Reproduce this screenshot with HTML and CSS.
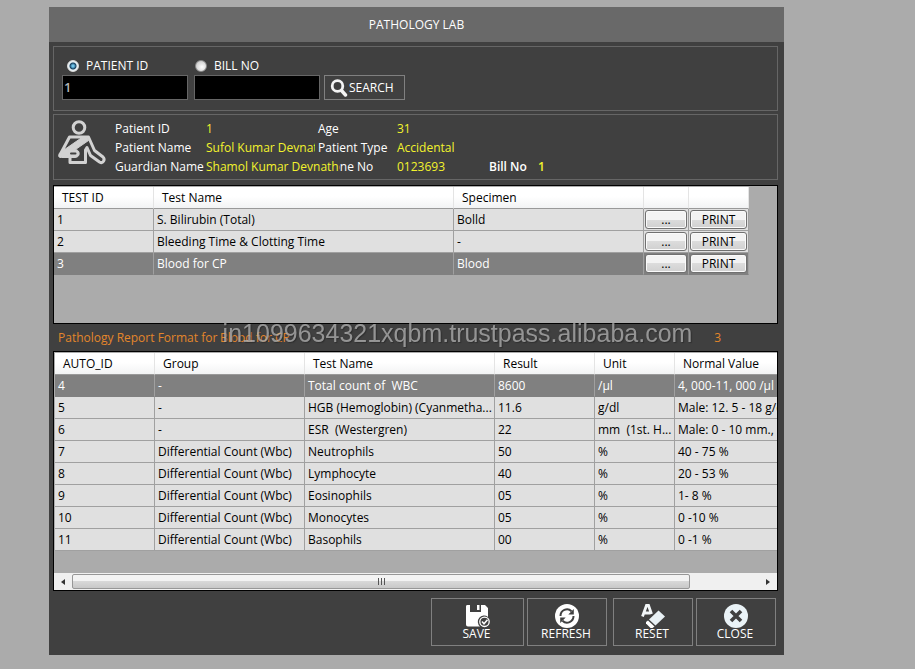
FILE: index.html
```html
<!DOCTYPE html>
<html lang="en">
<head>
<meta charset="utf-8">
<title>Pathology Lab</title>
<link rel="stylesheet" href="styles.css">
</head>
<body>
<main class="window">
  <h1 class="titlebar">PATHOLOGY LAB</h1>
  <div class="content">
    <form class="panel search">
      <div class="field">
        <label class="choice"><input type="radio" name="by" checked>PATIENT ID</label>
        <input class="box" type="text" value="1" aria-label="Patient ID">
      </div>
      <div class="field">
        <label class="choice"><input type="radio" name="by">BILL NO</label>
        <input class="box" type="text" aria-label="Bill No">
      </div>
      <button class="search-button" type="button">
        <svg width="18" height="18" viewBox="0 0 18 18" fill="none" stroke="#f4f4f4"><circle cx="7.500" cy="7" r="5.300" stroke-width="2.800"/><path d="M11.500 11.500l4 4.500" stroke-width="3.400" stroke-linecap="round"/></svg>
        SEARCH
      </button>
    </form>

    <section class="panel patient">
      <svg class="person" width="50" height="48" viewBox="0 0 50 48" fill="none" stroke="#d2d2d2" stroke-width="3" stroke-linejoin="round" stroke-linecap="round"><circle cx="21" cy="8.500" r="5.800"/><path d="M12 38V43.500H27.500V31L29 28.500L32.500 36.500L41.500 43C45 45 47.500 40.500 45 38L36.500 31.500L30.500 18H11.500L3 34"/><path d="M24 18.500L1.500 34Q-1 39 3.500 38.500L17 38.500C22.500 38.500 22.500 31 17.500 30.500L30.500 21.500L29 18Z" fill="#d2d2d2" stroke-width="1"/><path d="M13 34.500H17.500" stroke="#404040" stroke-width="2"/></svg>
      <dl class="facts">
        <dt>Patient ID</dt><dd>1</dd><dt>Age</dt><dd>31</dd>
        <dt class="start">Patient Name</dt><dd class="clip">Sufol Kumar Devnath</dd><dt>Patient Type</dt><dd>Accidental</dd>
        <dt class="start">Guardian Name</dt><dd class="over">Shamol Kumar Devnath</dd><dt>Phone No</dt><dd>0123693</dd><dt class="strong">Bill No</dt><dd class="strong">1</dd>
      </dl>
    </section>

    <section class="grid-frame tests">
      <table class="tests-table">
        <colgroup><col class="w100"><col class="w300"><col class="w190"><col class="w45"><col class="w60"></colgroup>
        <thead><tr><th>TEST ID</th><th>Test Name</th><th>Specimen</th><th></th><th></th></tr></thead>
        <tbody>
          <tr><td>1</td><td>S. Bilirubin (Total)</td><td>Bolld</td><td class="act"><button type="button">...</button></td><td class="act"><button type="button">PRINT</button></td></tr>
          <tr><td>2</td><td>Bleeding Time &amp; Clotting Time</td><td>-</td><td class="act"><button type="button">...</button></td><td class="act"><button type="button">PRINT</button></td></tr>
          <tr class="selected"><td>3</td><td>Blood for CP</td><td>Blood</td><td class="act"><button type="button">...</button></td><td class="act"><button type="button">PRINT</button></td></tr>
        </tbody>
      </table>
    </section>

    <div class="format"><span>Pathology Report Format for</span><span>Blood for CP</span><span class="format-id">3</span></div>

    <section class="grid-frame results">
      <div class="viewport">
      <table class="results-table">
        <colgroup><col class="w100"><col class="w150"><col class="w190"><col class="w100"><col class="w80"><col class="w184"></colgroup>
        <thead><tr><th>AUTO_ID</th><th>Group</th><th>Test Name</th><th>Result</th><th>Unit</th><th>Normal Value</th></tr></thead>
        <tbody>
          <tr class="selected"><td>4</td><td>-</td><td>Total count of&nbsp; WBC</td><td>8600</td><td>/µl</td><td>4, 000-11, 000 /µl</td></tr>
          <tr><td>5</td><td>-</td><td>HGB (Hemoglobin) (Cyanmetha...</td><td>11.6</td><td>g/dl</td><td>Male: 12. 5 - 18 g/dl</td></tr>
          <tr><td>6</td><td>-</td><td>ESR&nbsp; (Westergren)</td><td>22</td><td>mm&nbsp; (1st. H...</td><td>Male: 0 - 10 mm., Female</td></tr>
          <tr><td>7</td><td>Differential Count (Wbc)</td><td>Neutrophils</td><td>50</td><td>%</td><td>40 - 75 %</td></tr>
          <tr><td>8</td><td>Differential Count (Wbc)</td><td>Lymphocyte</td><td>40</td><td>%</td><td>20 - 53 %</td></tr>
          <tr><td>9</td><td>Differential Count (Wbc)</td><td>Eosinophils</td><td>05</td><td>%</td><td>1- 8 %</td></tr>
          <tr><td>10</td><td>Differential Count (Wbc)</td><td>Monocytes</td><td>05</td><td>%</td><td>0 -10 %</td></tr>
          <tr><td>11</td><td>Differential Count (Wbc)</td><td>Basophils</td><td>00</td><td>%</td><td>0 -1 %</td></tr>
        </tbody>
      </table>
      </div>
      <div class="scrollbar">
        <button class="arrow" type="button" aria-label="Scroll left"><svg width="4" height="6" viewBox="0 0 4 6"><path d="M4 0V6L0 3Z" fill="#333"/></svg></button>
        <div class="track"><div class="thumb"><i></i><i></i><i></i></div></div>
        <button class="arrow" type="button" aria-label="Scroll right"><svg width="4" height="6" viewBox="0 0 4 6"><path d="M0 0V6L4 3Z" fill="#333"/></svg></button>
      </div>
    </section>

    <footer class="actions">
      <div class="pair">
        <button class="wide" type="button">
          <svg width="26" height="26" viewBox="0 0 26 26"><path d="M3 2H6V9H17V2H21L24 5V14A6 6 0 0 0 16 23.500H4Q2 23.500 2 21.500V3.500Q2 2 3 2Z" fill="#fff"/><path d="M13 2H15.500V7H13Z" fill="#fff"/><circle cx="20.500" cy="18.800" r="4.700" fill="#404040" stroke="#fff" stroke-width="1.300"/><path d="M18 18.500L20 20.800L23.500 16.800" fill="none" stroke="#fff" stroke-width="1.500"/></svg>
          SAVE</button>
        <button type="button">
          <svg width="26" height="26" viewBox="0 0 26 26"><circle cx="14" cy="13" r="12" fill="#fff"/><path d="M7.500 13A6.500 6.500 0 0 1 18.500 8.200M20.500 13A6.500 6.500 0 0 1 9.500 17.800" fill="none" stroke="#404040" stroke-width="2"/><path d="M20.800 6V11.500H15.300ZM7.200 20V14.500H12.700Z" fill="#404040"/></svg>
          REFRESH</button>
      </div>
      <div class="pair">
        <button type="button">
          <svg width="26" height="26" viewBox="0 0 26 26"><path d="M3.500 13.500L7.500 2.500H9.500L12.500 11M5 10H11" fill="none" stroke="#f2f6f8" stroke-width="2.800"/><path d="M19.500 7.500L26 13.500L16.500 22.500L10 16.500Z" fill="#e8f1f5"/><path d="M9 17.500L15.500 23.500L13.500 25H11.500L7 20.500V19Z" fill="#fff"/></svg>
          RESET</button>
        <button type="button">
          <svg width="26" height="26" viewBox="0 0 26 26"><circle cx="14" cy="13" r="12" fill="#eaf3f7"/><path d="M9 8L19 18M19 8L9 18" stroke="#404040" stroke-width="3.600"/></svg>
          CLOSE</button>
      </div>
    </footer>
  </div>
</main>
<div class="watermark">in1099634321xqbm.trustpass.alibaba.com</div>
</body>
</html>
```
FILE: styles.css
```css
* { box-sizing: border-box; }
body {
  margin: 0;
  padding: 7px 131px 14px 49px;
  background: #ababab;
  font: 12px/18px "Open Sans", "Noto Sans", sans-serif;
  color: #000;
}
button, input { font: inherit; }
.window { background: #404040; }
.titlebar {
  margin: 0;
  background: #696969;
  color: #fff;
  font-size: 12px;
  font-weight: 400;
  line-height: 35px;
  text-align: center;
}
.content { padding: 4px 6px 9px 4px; }
.panel { border: 1px solid #666; color: #fff; }

.search {
  display: flex;
  align-items: flex-end;
  height: 65px;
  padding: 0 8px 10px;
}
.field { width: 126px; margin-right: 6px; }
.field + .field { margin-right: 4px; }
.choice { display: flex; align-items: center; gap: 7px; padding-left: 5px; height: 19px; }
.field + .field .choice { padding-left: 1px; }
.choice input {
  appearance: none;
  width: 12px;
  height: 12px;
  margin: 0;
  border: 1px solid #8b8b8b;
  border-radius: 50%;
  background: radial-gradient(circle at 60% 60%, #fff, #bbb);
}
.choice input:checked { border-color: #ddd; background: radial-gradient(circle, #6fc3ea 0 1px, #143f60 3px, #e8f1f5 4px); }
.box {
  display: block;
  width: 100%;
  height: 25px;
  padding: 0 1px 2px;
  border: 1px solid #666;
  border-radius: 0;
  background: #000;
  color: #b4b4b4;
  font-size: 13px;
  font-weight: 600;
}
.search-button {
  display: flex;
  align-items: center;
  gap: 1px;
  width: 81px;
  height: 25px;
  padding: 0 0 0 5px;
  border: 1px solid #808080;
  background: #404040;
  color: #fff;
}

.patient { display: flex; height: 66px; margin-top: 3px; padding: 4px 4px 0; }
.person { flex: none; }
.facts {
  display: grid;
  grid-template-columns: 91px 112px 79px 92px 49px 40px;
  grid-auto-rows: 19px;
  margin: 0 0 0 7px;
  line-height: 19px;
  white-space: nowrap;
}
.facts dd { margin: 0; color: #f3f32c; }
.facts .start { grid-column: 1; }
.facts .clip { overflow: hidden; margin-right: 3px; }
.facts .over { position: relative; justify-self: start; background: #404040; }
.facts .strong { font-weight: 600; }

.grid-frame { padding-top: 1px; border: 1px solid #000; background: #ababab; }
.tests { min-height: 139px; margin-top: 5px; }
table { border-collapse: separate; border-spacing: 0; table-layout: fixed; }
.tests-table { width: 695px; }
.results-table { width: 804px; }
.w45 { width: 45px; }
.w60 { width: 60px; }
.w80 { width: 80px; }
.w100 { width: 100px; }
.w150 { width: 150px; }
.w184 { width: 184px; }
.w190 { width: 190px; }
.w300 { width: 300px; }
th {
  height: 22px;
  padding: 0 8px;
  border-right: 1px solid #e4e4e4;
  border-bottom: 1px solid #999;
  background: linear-gradient(#fff 45%, #f2f3f4);
  font-weight: 400;
  text-align: left;
}
td {
  height: 22px;
  padding: 0 0 0 3px;
  border-right: 1px solid #a0a0a0;
  border-bottom: 1px solid #a0a0a0;
  background: #e0e0e0;
  overflow: hidden;
  white-space: nowrap;
}
.selected td { background: #808080; border-bottom-color: #808080; color: #fff; }
.act { padding: 0 1px; }
.act button {
  display: block;
  width: 100%;
  height: 19px;
  padding: 0;
  border: 1px solid #707070;
  border-radius: 3px;
  background: linear-gradient(#f3f3f3 50%, #dcdcdc 50%, #d0d0d0);
  box-shadow: inset 0 0 0 1px #fafafa;
  line-height: 17px;
}

.format {
  display: grid;
  grid-template-columns: 162px 1fr auto;
  height: 27px;
  padding: 0 57px 0 5px;
  line-height: 27px;
  color: #e3862b;
  white-space: nowrap;
}
.viewport { overflow: hidden; height: 220px; padding-left: 1px; }
.scrollbar { display: flex; height: 17px; background: #f0f0f0; }
.arrow { display: grid; place-items: center; width: 18px; padding: 0; border: 0; background: none; }
.track { flex: 1; padding: 1px 0; }
.thumb {
  display: flex;
  align-items: center;
  justify-content: center;
  gap: 2px;
  width: 90%;
  height: 15px;
  border: 1px solid #979797;
  border-radius: 2px;
  background: linear-gradient(#f3f3f3 45%, #d8d8d8 50%, #c8c8c8);
}
.thumb i { width: 1px; height: 7px; background: #555; }

.actions { display: flex; justify-content: flex-end; gap: 6px; padding: 7px 2px 0; }
.pair { display: flex; gap: 3px; }
.actions button {
  display: flex;
  flex-direction: column;
  align-items: center;
  width: 80px;
  height: 48px;
  padding: 4px 2px 0 0;
  border: 1px solid #808080;
  background: #404040;
  color: #fff;
  line-height: 9px;
}
.actions .wide { width: 93px; }

.watermark {
  position: fixed;
  inset: 0 0 4px;
  display: grid;
  place-items: center;
  pointer-events: none;
  font: 25px/28px "Liberation Sans", sans-serif;
  color: rgba(190, 190, 190, 0.7);
  text-shadow: 1px 1px 1px rgba(30, 30, 30, 0.5);
}
```
